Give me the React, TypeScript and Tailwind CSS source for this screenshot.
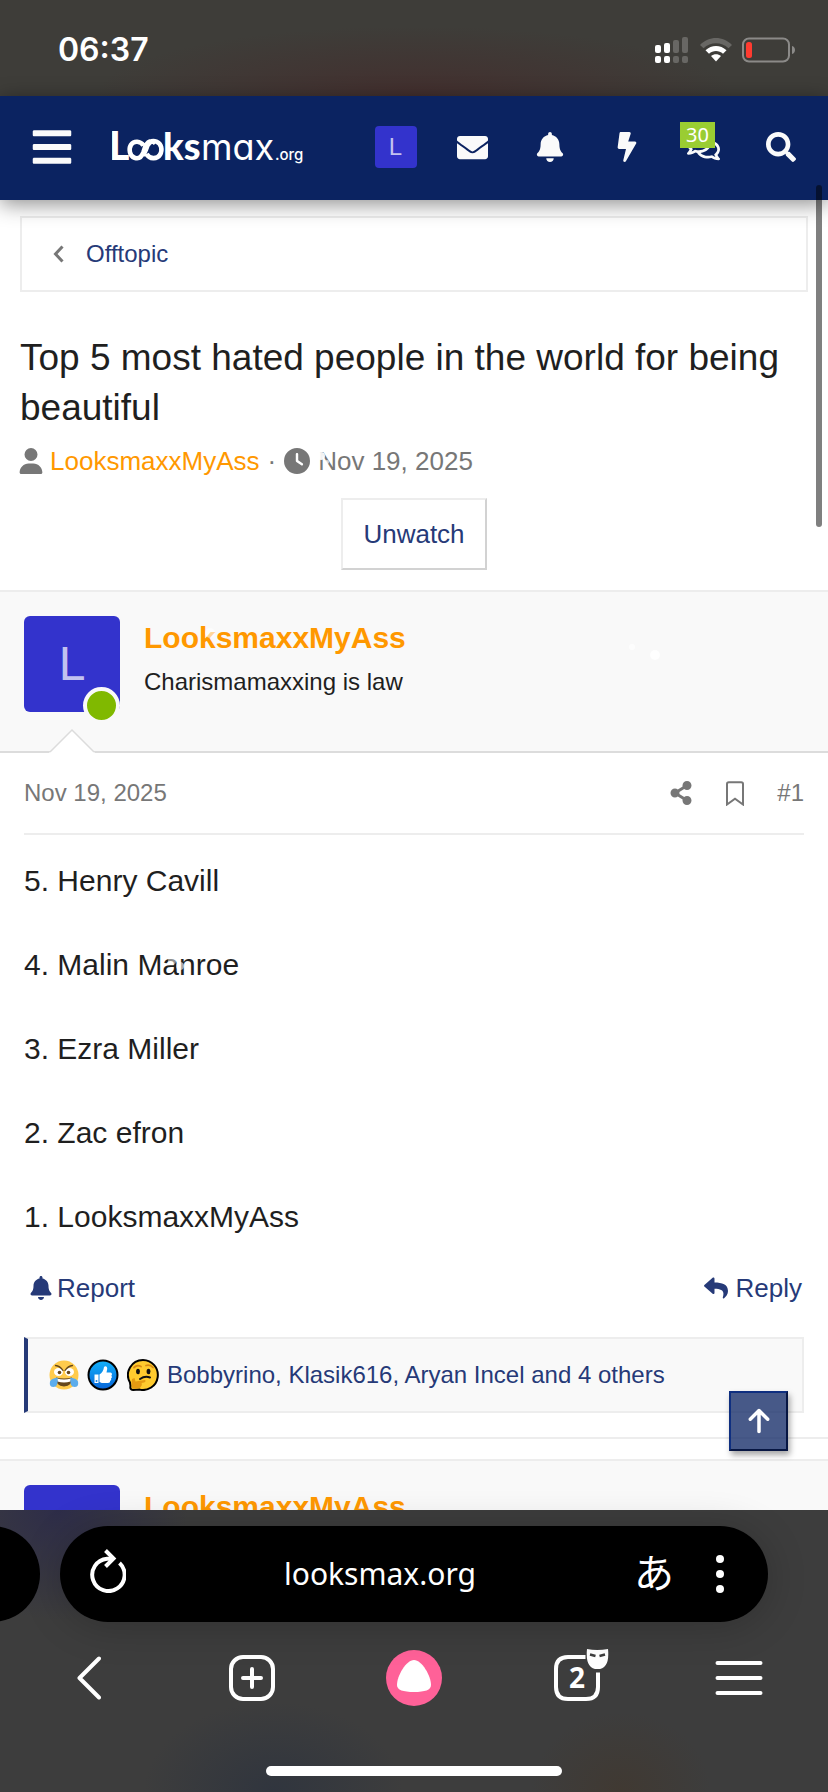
import React from "react";
import {
  FaBars,
  FaBell,
  FaBolt,
  FaEnvelope,
  FaRegComments,
  FaReply,
  FaSearch,
  FaShareAlt,
} from "react-icons/fa";
import { FaArrowUp, FaClock, FaUser } from "react-icons/fa6";

const sans = "font-['Liberation_Sans',Arial,sans-serif]";

function StatusBar() {
  return (
    <div className="flex h-24 shrink-0 items-center justify-between bg-[#3e3d39] bg-[radial-gradient(ellipse_320px_70px_at_50%_100%,#432f2e,transparent)] pl-[58px] pr-8 pt-1">
      <time className="font-['Inter',sans-serif] text-[32px] leading-10 font-semibold text-white">06:37</time>
      <div className="flex items-center gap-3">
        <svg width="33" height="26" viewBox="0 0 33 26" aria-hidden="true">
          <g fill="#fff">
            <rect x="0" y="8" width="6" height="8" rx="2" />
            <rect x="9" y="6" width="6" height="10" rx="2" />
            <rect x="0" y="19" width="6" height="7" rx="2" />
            <rect x="9" y="19" width="6" height="7" rx="2" />
          </g>
          <g fill="#686764">
            <rect x="18" y="3" width="6" height="13" rx="2" />
            <rect x="27" y="0" width="6" height="16" rx="2" />
            <rect x="18" y="19" width="6" height="7" rx="2" />
            <rect x="27" y="19" width="6" height="7" rx="2" />
          </g>
        </svg>
        <svg width="32" height="24" viewBox="0 0 32 24" aria-hidden="true">
          <path d="M0 7C9-2.300 23-2.300 32 7L28.500 10.300C21.500 3.500 10.500 3.500 3.500 10.300Z" fill="#686764" />
          <path d="M5.500 12.300C11.500 6.500 20.500 6.500 26.500 12.300L23 15.700C19 12 13 12 9 15.700Z" fill="#fff" />
          <path d="M11 18C14 15.600 18 15.600 21 18L16 23.500Z" fill="#fff" />
        </svg>
        <svg width="54" height="26" viewBox="0 0 54 26" className="-ml-0.5" aria-hidden="true">
          <rect x="1" y="1.500" width="46" height="23" rx="6" fill="none" stroke="#8b8a88" strokeWidth="2" />
          <rect x="4" y="5" width="6" height="16" rx="2.500" fill="#ff3b30" />
          <path d="M50 9C54 10 54 16 50 17Z" fill="#8b8a88" />
        </svg>
      </div>
    </div>
  );
}

function Logo() {
  return (
    <svg width="196" height="44" viewBox="0 -3 196 44" fill="#fff" role="img" aria-label="Looksmax.org">
      <text x="-3" y="32" fontFamily="Lato, sans-serif" fontWeight="900" fontSize="39">L</text>
      <path
        d="M40.500 15.500C38.500 13.300 35.800 12.800 33 14.500C30.500 16.300 29.500 20.500 28.500 24C26.500 29.500 23 31 19.500 29.800C14.500 28 13.500 21 16 16.800C19 12.300 25.500 12.800 28.500 17.500M31.500 26C34.500 31.300 42 31.500 45 26.800C47.800 22 46.500 15.500 41.500 13.600C37.500 12.300 34.500 13.500 32.500 17.500C31 21.500 30 25 28 27"
        transform="translate(3 0)"
        fill="none"
        stroke="#fff"
        strokeWidth="4.600"
      />
      <text x="51" y="32" fontFamily="Lato, sans-serif" fontWeight="900" fontSize="38">ks</text>
      <text x="89" y="32" fontFamily="Inter, sans-serif" fontWeight="400" fontSize="36" style={{ fontFeatureSettings: "'cv11'" }}>max</text>
      <text x="163" y="32" fontFamily="Inter, sans-serif" fontWeight="500" fontSize="15">.org</text>
    </svg>
  );
}

function NavBar() {
  const cell = "flex h-full w-[77px] items-center justify-center";
  return (
    <header className="relative z-10 flex h-[104px] shrink-0 items-center bg-[#0b2361] pb-0.5 pl-[30px] pr-[9px] text-[#fafafa] shadow-[0_4px_20px_rgba(0,0,0,0.45)]">
      <button type="button" aria-label="Menu" className="mr-[38px]">
        <FaBars size={44} />
      </button>
      <a href="#home" aria-label="Looksmax.org">
        <Logo />
      </a>
      <nav className="ml-auto flex h-full">
        <a href="#account" aria-label="Account" className={cell}>
          <span className={"flex size-[42px] items-center justify-center rounded bg-[#3333cc] text-2xl text-[#c2c2f0] " + sans}>L</span>
        </a>
        <a href="#messages" aria-label="Messages" className={cell}><FaEnvelope size={31} /></a>
        <a href="#alerts" aria-label="Alerts" className={cell}><FaBell size={30} /></a>
        <a href="#new" aria-label="What's new" className={cell}><FaBolt size={30} /></a>
        <a href="#chat" aria-label="Chat" className={cell + " relative"}>
          <FaRegComments size={33} />
          <span className="absolute top-[26px] left-[15px] bg-[#9acd32] px-1.5 font-['Noto_Sans',sans-serif] text-[20px] leading-[26px] text-white">30</span>
        </a>
        <a href="#search" aria-label="Search" className={cell}><FaSearch size={30} /></a>
      </nav>
    </header>
  );
}

function PostHeader() {
  return (
    <div className="relative flex h-[163px] gap-6 border-t-2 border-b-2 border-t-[#ededed] border-b-[#dcdcdc] bg-[#f9f9f9] px-6 pt-6">
      <div className="relative flex size-24 items-center justify-center rounded-md bg-[#3333cc] text-5xl text-[#c2c2f0]">
        L
        <span className="absolute right-0 -bottom-3 size-[37px] rounded-full border-4 border-[#f9f9f9] bg-[#80b900]" />
      </div>
      <div>
        <h2 className="pt-1 text-[30px] leading-9 font-bold">
          <a href="#author" className="text-[#ff9800]">LooksmaxxMyAss</a>
        </h2>
        <p className="pt-2 text-[24px] leading-9 text-[#1f1f1f]">Charismamaxxing is law</p>
      </div>
      <svg width="46" height="25" viewBox="0 0 46 25" className="absolute -bottom-0.5 left-[49px]" aria-hidden="true">
        <path d="M0 25L23 2L46 25Z" fill="#fff" />
        <path d="M1 24L23 2L45 24" fill="none" stroke="#dcdcdc" strokeWidth="1.500" />
      </svg>
    </div>
  );
}

function LaughIcon() {
  return (
    <svg width="30" height="30" viewBox="0 0 30 30" aria-label="JFL" role="img">
      <circle cx="15" cy="15" r="14.500" fill="#ffcb4c" />
      <ellipse cx="9.500" cy="12" rx="4.500" ry="4" fill="#fff" />
      <ellipse cx="20.500" cy="12" rx="4.500" ry="4" fill="#fff" />
      <circle cx="10.500" cy="12.500" r="1.800" fill="#65471b" />
      <circle cx="19.500" cy="12.500" r="1.800" fill="#65471b" />
      <path d="M6.500 5.500Q11 6 14 10.500M23.500 5.500Q19 6 16 10.500" fill="none" stroke="#65471b" strokeWidth="1.300" strokeLinecap="round" />
      <path d="M7 17.500Q15 19.500 23 17.500Q23.500 26 15 26.500Q6.500 26 7 17.500Z" fill="#65471b" />
      <path d="M8 18.500Q15 20.500 22 18.500L21.500 21.500Q15 23.300 8.500 21.500Z" fill="#fff" />
      <path d="M8.500 17.500Q9.500 27 4.500 27Q0 27 1 21.500Q2 18.500 8.500 17.500Z" fill="#5dadec" />
      <path d="M21.500 17.500Q20.500 27 25.500 27Q30 27 29 21.500Q28 18.500 21.500 17.500Z" fill="#5dadec" />
    </svg>
  );
}

function LikeIcon() {
  return (
    <svg width="32" height="32" viewBox="0 0 32 32" aria-label="Like" role="img">
      <defs>
        <linearGradient id="like" x1="0" y1="0" x2="0" y2="1">
          <stop offset="0" stopColor="#12b2fb" />
          <stop offset="1" stopColor="#0764d8" />
        </linearGradient>
      </defs>
      <circle cx="16" cy="16" r="14.500" fill="url(#like)" stroke="#000" strokeWidth="2" />
      <path d="M7.500 15.500H11.500V24H7.500Z" fill="#fff" />
      <path d="M12.500 15.500C15.500 13.500 16.500 11 17 8C18.500 6.300 20.500 7.500 20.200 10L19.500 13.500H23.500C25.300 14 25.300 16 24.300 16.800C25.300 17.800 25 19 24 19.500C24.500 20.800 24 21.600 23 22C23.300 23.300 22.500 24 21 24H16C14.500 24 13.500 23.500 12.500 23Z" fill="#fff" />
      <circle cx="9.500" cy="22" r="1" fill="#1683e3" />
    </svg>
  );
}

function ThinkingIcon() {
  return (
    <svg width="32" height="32" viewBox="0 0 32 32" aria-label="Hmm" role="img">
      <path d="M16 1A15 15 0 1 1 12 30.500L6 31C3.500 31 3 29 3.500 27L3 23.500A15 15 0 0 1 16 1Z" fill="#ffcb2e" stroke="#000" strokeWidth="2" />
      <path d="M7 8.500Q10 5.500 14 7.500M19 6.500Q23 5 26 8.500" fill="none" stroke="#d98a14" strokeWidth="1.800" strokeLinecap="round" />
      <ellipse cx="11" cy="12.500" rx="1.900" ry="2.800" fill="#111" />
      <ellipse cx="21.500" cy="12.500" rx="1.900" ry="2.800" fill="#111" />
      <path d="M13 20Q18 16.500 23 18.500" fill="none" stroke="#111" strokeWidth="2" strokeLinecap="round" />
      <path d="M5 20L7.500 19L8.500 22.500L17.500 21C19 21 19 23 17 23.500L14.500 24C15.500 26 14 29 11 29.500L6 29.800C4.500 29 4.300 24 5 20Z" fill="#e59b12" />
    </svg>
  );
}

const lines = ["5. Henry Cavill", "4. Malin Manroe", "3. Ezra Miller", "2. Zac efron", "1. LooksmaxxMyAss"];

function Thread() {
  return (
    <main className={"relative min-h-0 flex-1 overflow-hidden bg-white " + sans}>
      <div className="mx-5 mt-4 flex h-[76px] items-center border-2 border-[#ededed] pl-[31px]">
        <svg width="12" height="18" viewBox="0 0 12 18" aria-hidden="true">
          <path d="M9.500 1.500L2.500 9L9.500 16.500" fill="none" stroke="#777" strokeWidth="3" />
        </svg>
        <a href="#offtopic" className="ml-[21px] text-[24px] leading-8 text-[#263a78]">Offtopic</a>
      </div>

      <div className="px-5 pt-[41px]">
        <h1 className="text-[37px] leading-[50px] text-[#1f1f1f]">Top 5 most hated people in the world for being beautiful</h1>
        <div className="flex items-center pt-2.5 text-[26px] leading-9 text-[#777]">
          <FaUser size={26} className="-ml-0.5 mr-1.5" />
          <a href="#author" className="text-[#ff9800]">LooksmaxxMyAss</a>
          <span className="mx-2">·</span>
          <FaClock size={26} className="mr-2" />
          <time>Nov 19, 2025</time>
        </div>
        <div className="flex justify-center pt-[19px]">
          <button type="button" className="h-[72px] border-2 border-t-[#ededed] border-r-[#d2d2d2] border-b-[#d2d2d2] border-l-[#ededed] px-5 text-[26px] text-[#263a78]">Unwatch</button>
        </div>
      </div>

      <article className="mt-5 border-b-2 border-[#ededed] pb-6">
        <PostHeader />
        <div className="px-6">
          <div className="flex h-[82px] items-center border-b-2 border-[#ededed] text-[24px] text-[#777]">
            <time>Nov 19, 2025</time>
            <button type="button" aria-label="Share" className="ml-auto"><FaShareAlt size={24} /></button>
            <button type="button" aria-label="Bookmark" className="mr-8 ml-8">
              <svg width="20" height="25" viewBox="0 0 20 25">
                <path d="M2 23.500V3Q2 1.200 3.800 1.200H16.200Q18 1.200 18 3V23.500L10 17.800Z" fill="none" stroke="#777" strokeWidth="2" />
              </svg>
            </button>
            <a href="#post-1">#1</a>
          </div>
          <div className="flex flex-col gap-[42px] pt-[25px] text-[30px] leading-[42px] text-[#1f1f1f]">
            {lines.map((line) => (
              <p key={line}>{line}</p>
            ))}
          </div>
          <div className="mt-[25px] flex h-[50px] items-center justify-between text-[26px] text-[#263a78]">
            <a href="#report" className="flex items-center gap-1 pl-[5px]"><FaBell size={24} />Report</a>
            <a href="#reply" className="flex items-center gap-2 pr-0.5"><FaReply size={24} />Reply</a>
          </div>
          <div className="mt-6 flex h-[76px] items-center gap-2 border-2 border-l-4 border-[#ededed] border-l-[#263a78] bg-[#f9f9f9] pl-[21px] text-[24px] text-[#263a78]">
            <LaughIcon />
            <LikeIcon />
            <ThinkingIcon />
            <a href="#reactions">Bobbyrino, Klasik616, Aryan Incel and 4 others</a>
          </div>
        </div>
      </article>
      <article className="mt-5">
        <PostHeader />
      </article>

      <svg className="pointer-events-none absolute top-0 left-0" width="828" height="1310" viewBox="0 0 828 1310" fill="#fff" aria-hidden="true">
        <circle cx="321" cy="256" r="4" opacity="0.9" />
        <circle cx="327" cy="262" r="2" opacity="0.7" />
        <circle cx="210" cy="433" r="5" opacity="0.6" />
        <circle cx="632" cy="447" r="3" opacity="0.7" />
        <circle cx="655" cy="455" r="5" opacity="0.9" />
        <circle cx="172" cy="761" r="4" opacity="0.5" />
        <circle cx="180" cy="766" r="4" opacity="0.6" />
      </svg>

      <button
        type="button"
        aria-label="Back to top"
        className="absolute right-10 bottom-[59px] flex h-[60px] w-[59px] items-center justify-center border-2 border-t-[#0f2f80] border-r-[#071642] border-b-[#071642] border-l-[#0f2f80] bg-[#0b2361]/75 text-white shadow-[2px_4px_6px_rgba(0,0,0,0.35)]"
      >
        <FaArrowUp size={28} />
      </button>
    </main>
  );
}

function BrowserBar() {
  const item = "flex justify-center";
  return (
    <footer className="shrink-0 bg-[#3d3d3d] bg-[radial-gradient(ellipse_130px_110px_at_7%_0%,#2e2d49,transparent),radial-gradient(ellipse_130px_90px_at_33%_100%,#30353e,transparent),radial-gradient(ellipse_90px_80px_at_75%_100%,#403932,transparent)] pt-4 pb-4">
      <div className="flex">
        <div className="h-24 w-10 overflow-hidden">
          <div className="-ml-24 h-24 w-[136px] rounded-full bg-black" />
        </div>
        <div className="relative mr-[60px] ml-5 flex h-24 flex-1 items-center rounded-full bg-black pr-11 pl-7 text-white shadow-[0_4px_40px_rgba(0,0,0,0.2)]">
          <button type="button" aria-label="Reload">
            <svg width="38" height="46" viewBox="0 0 38 46" fill="none" stroke="#fff" strokeWidth="4" className="-mt-2">
              <path d="M31.500 16A16.200 16.200 0 1 1 19 11.700H25" />
              <path d="M17.500 3.500L25.500 11.500L17.500 19.500" />
            </svg>
          </button>
          <span className="flex-1 text-center font-['Noto_Sans',sans-serif] text-[30px] leading-10">looksmax.org</span>
          <button type="button" aria-label="Translate" className="pb-1.5 font-['Noto_Sans_CJK_JP',sans-serif] text-[40px] leading-10">あ</button>
          <button type="button" aria-label="More" className="ml-[42px]">
            <svg width="8" height="40" viewBox="0 0 8 40" fill="#fff">
              <circle cx="4" cy="5" r="4" />
              <circle cx="4" cy="20" r="4" />
              <circle cx="4" cy="35" r="4" />
            </svg>
          </button>
        </div>
      </div>
      <div className="grid h-[112px] grid-cols-5 items-center px-2 text-white">
        <button type="button" aria-label="Back" className={item}>
          <svg width="24" height="44" viewBox="0 0 24 44" fill="none" stroke="#fff" strokeWidth="4" strokeLinecap="round" strokeLinejoin="round">
            <path d="M22 2.500L2.500 22L22 41.500" />
          </svg>
        </button>
        <button type="button" aria-label="New tab" className={item}>
          <svg width="48" height="48" viewBox="0 0 48 48" fill="none" stroke="#fff" strokeWidth="4" strokeLinecap="round">
            <rect x="3" y="3" width="42" height="42" rx="12" />
            <path d="M24 15V33M15 24H33" />
          </svg>
        </button>
        <button type="button" aria-label="Assistant" className={item}>
          <svg width="56" height="56" viewBox="0 0 56 56">
            <circle cx="28" cy="28" r="28" fill="#ff6198" />
            <path d="M28 10C36 10 45 26 45 35C45 40 39 42 28 42C17 42 11 40 11 35C11 26 20 10 28 10Z" fill="#fff" />
          </svg>
        </button>
        <button type="button" aria-label="2 tabs" className={item}>
          <svg width="66" height="62" viewBox="-4 0 66 62">
            <path d="M38.500 10H21Q9 10 9 22V40Q9 52 21 52H39Q51 52 51 40V25.500" fill="none" stroke="#fff" strokeWidth="4" />
            <path d="M40 2Q50 4 61 2Q63 22 50.500 22Q38 22 40 2Z" fill="#fff" />
            <path d="M43 7.500L48.500 9M58 7.500L52.500 9" stroke="#3d3d3d" strokeWidth="2.500" />
            <text x="30" y="41" textAnchor="middle" fill="#fff" fontFamily="Noto Sans, sans-serif" fontWeight="700" fontSize="28">2</text>
          </svg>
        </button>
        <button type="button" aria-label="Browser menu" className={item}>
          <svg width="48" height="36" viewBox="0 0 48 36" stroke="#fff" strokeWidth="4" strokeLinecap="round">
            <path d="M2.500 3H45.500M2.500 18H45.500M2.500 33H45.500" />
          </svg>
        </button>
      </div>
      <div className="mx-auto mt-8 h-2.5 w-[296px] rounded-full bg-white" />
    </footer>
  );
}

export default function App() {
  return (
    <div className="relative flex h-screen flex-col overflow-hidden">
      <StatusBar />
      <NavBar />
      <Thread />
      <BrowserBar />
      <div className="absolute top-[185px] right-1.5 z-20 h-[342px] w-1.5 rounded-full bg-black/50" />
    </div>
  );
}
